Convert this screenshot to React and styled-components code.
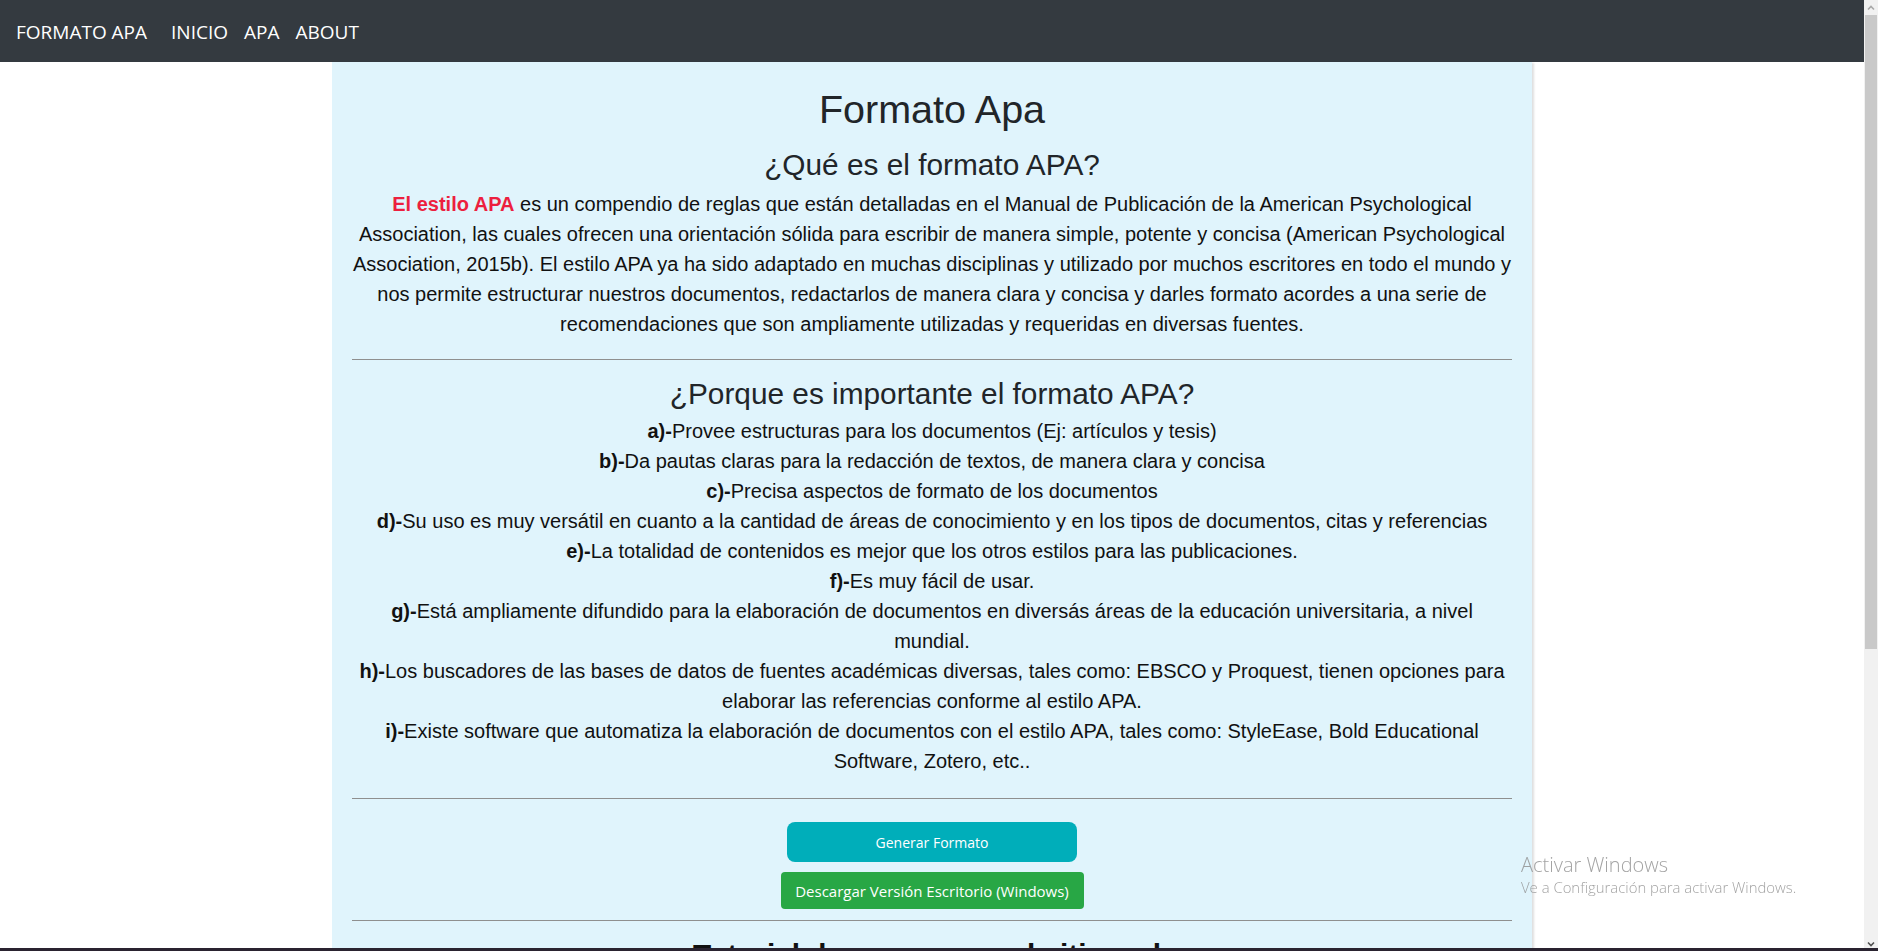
import React from "react";
import styled, { createGlobalStyle } from "styled-components";

const GlobalStyle = createGlobalStyle`
  html, body {
    margin: 0;
    padding: 0;
    background: #fff;
  }
  body {
    padding-right: 14px;
    font-family: "Liberation Sans", Arial, sans-serif;
  }
`;

const NavBar = styled.nav`
  display: flex;
  align-items: center;
  height: 62px;
  padding: 2px 16px 0;
  box-sizing: border-box;
  background-color: #343a40;
  font-family: "Open Sans", "Noto Sans", sans-serif;
  font-size: 19px;
  color: #fff;
`;

const Brand = styled.span`
  margin-right: 16px;
`;

const NavLink = styled.a`
  padding: 0 8px;
  color: #fff;
  text-decoration: none;
`;

const Panel = styled.main`
  width: 1200px;
  margin: 0 auto;
  padding: 23px 20px 35px;
  box-sizing: border-box;
  background-color: #e0f4fc;
  box-shadow: 3px 0 2px -1px rgba(0, 0, 0, 0.13);
  text-align: center;
`;

const Title = styled.h1`
  margin: 0;
  font-size: 39.5px;
  font-weight: 400;
  line-height: 48px;
  color: #212529;
`;

const Heading = styled.h2`
  margin: ${(p) => p.$top || 0}px 0 0;
  font-size: 29.8px;
  font-weight: ${(p) => (p.$bold ? 700 : 400)};
  line-height: 36px;
  color: ${(p) => (p.$bold ? "#111" : "#212529")};
`;

const Text = styled.p`
  margin: ${(p) => p.$top || 0}px 0 0;
  font-size: 20px;
  line-height: 30px;
  color: #111;
`;

const Highlight = styled.strong`
  color: #ec1f3f;
`;

const Divider = styled.hr`
  margin: ${(p) => p.$top}px 0 0;
  border: 0;
  border-top: 1px solid #8f8f8f;
`;

const ItemList = styled.div`
  margin-top: 4px;
`;

const Item = styled.p`
  margin: 0;
  font-size: 20px;
  line-height: 30px;
  color: #111;
`;

const ButtonStack = styled.div`
  display: flex;
  flex-direction: column;
  align-items: center;
  gap: 10px;
  margin-top: 23px;
`;

const Button = styled.button`
  width: ${(p) => p.$width}px;
  height: ${(p) => p.$height}px;
  padding: 0;
  border: 0;
  border-radius: ${(p) => p.$radius}px;
  background-color: ${(p) => p.$bg};
  color: #fff;
  font-family: "Open Sans", "Noto Sans", sans-serif;
  font-size: ${(p) => p.$size}px;
  cursor: pointer;
`;

const VideoFrame = styled.div`
  width: 640px;
  height: 360px;
  margin: 16px auto 0;
  background-color: #1c1c1c;
`;

/* browser scrollbar and OS overlays drawn over the page */
const ScrollBar = styled.div`
  position: fixed;
  top: 0;
  right: 0;
  bottom: 0;
  width: 14px;
  display: flex;
  flex-direction: column;
  background-color: #f1f1f1;
`;

const ScrollArrow = styled.div`
  display: flex;
  align-items: center;
  justify-content: center;
  height: 15px;
  flex: none;
`;

const ScrollThumb = styled.div`
  height: 634px;
  margin: 0 1px;
  background-color: #c9c9c9;
`;

const ScrollTrack = styled.div`
  flex: 1;
`;

const Watermark = styled.div`
  position: fixed;
  left: 1521px;
  top: 851px;
  font-family: "Open Sans", "Noto Sans", sans-serif;
  font-weight: 300;
  color: rgba(140, 140, 140, 0.8);
  pointer-events: none;
`;

const WatermarkTitle = styled.div`
  font-size: 20px;
  line-height: 27px;
`;

const WatermarkText = styled.div`
  font-size: 14.9px;
  line-height: 19px;
`;

const TaskbarEdge = styled.div`
  position: fixed;
  left: 0;
  right: 0;
  bottom: 0;
  height: 3px;
  background-color: #2a2330;
`;

const items = [
  ["a)-", "Provee estructuras para los documentos (Ej: artículos y tesis)"],
  ["b)-", "Da pautas claras para la redacción de textos, de manera clara y concisa"],
  ["c)-", "Precisa aspectos de formato de los documentos"],
  ["d)-", "Su uso es muy versátil en cuanto a la cantidad de áreas de conocimiento y en los tipos de documentos, citas y referencias"],
  ["e)-", "La totalidad de contenidos es mejor que los otros estilos para las publicaciones."],
  ["f)-", "Es muy fácil de usar."],
  ["g)-", "Está ampliamente difundido para la elaboración de documentos en diversás áreas de la educación universitaria, a nivel mundial."],
  ["h)-", "Los buscadores de las bases de datos de fuentes académicas diversas, tales como: EBSCO y Proquest, tienen opciones para elaborar las referencias conforme al estilo APA."],
  ["i)-", "Existe software que automatiza la elaboración de documentos con el estilo APA, tales como: StyleEase, Bold Educational Software, Zotero, etc.."],
];

function Chevron({ up, color }) {
  return (
    <svg width="10" height="8" viewBox="0 0 10 8">
      <path d={up ? "M2 5.5 5 2.5 8 5.5" : "M2 2.5 5 5.5 8 2.5"} fill="none" stroke={color} strokeWidth="1.6" />
    </svg>
  );
}

export default function App() {
  return (
    <>
      <GlobalStyle />
      <NavBar>
        <Brand>FORMATO APA</Brand>
        <NavLink href="#">INICIO</NavLink>
        <NavLink href="#">APA</NavLink>
        <NavLink href="#">ABOUT</NavLink>
      </NavBar>
      <Panel>
        <Title>Formato Apa</Title>
        <Heading $top={14}>¿Qué es el formato APA?</Heading>
        <Text $top={6}>
          <Highlight>El estilo APA</Highlight> es un compendio de reglas que están detalladas en el Manual de
          Publicación de la American Psychological Association, las cuales ofrecen una orientación sólida para
          escribir de manera simple, potente y concisa (American Psychological Association, 2015b). El estilo APA
          ya ha sido adaptado en muchas disciplinas y utilizado por muchos escritores en todo el mundo y nos
          permite estructurar nuestros documentos, redactarlos de manera clara y concisa y darles formato acordes
          a una serie de recomendaciones que son ampliamente utilizadas y requeridas en diversas fuentes.
        </Text>
        <Divider $top={20} />
        <Heading $top={16}>¿Porque es importante el formato APA?</Heading>
        <ItemList>
          {items.map(([label, text]) => (
            <Item key={label}>
              <strong>{label}</strong>
              {text}
            </Item>
          ))}
        </ItemList>
        <Divider $top={22} />
        <ButtonStack>
          <Button $width={290} $height={40} $radius={8} $bg="#00aeba" $size={14}>
            Generar Formato
          </Button>
          <Button $width={303} $height={37} $radius={4} $bg="#28a745" $size={15}>
            Descargar Versión Escritorio (Windows)
          </Button>
        </ButtonStack>
        <Divider $top={11} />
        <Heading $top={16} $bold>
          Tutorial de como usar el sitio web
        </Heading>
        <VideoFrame />
      </Panel>
      <ScrollBar>
        <ScrollArrow>
          <Chevron up color="#a8a8a8" />
        </ScrollArrow>
        <ScrollThumb />
        <ScrollTrack />
        <ScrollArrow>
          <Chevron color="#505050" />
        </ScrollArrow>
      </ScrollBar>
      <Watermark>
        <WatermarkTitle>Activar Windows</WatermarkTitle>
        <WatermarkText>Ve a Configuración para activar Windows.</WatermarkText>
      </Watermark>
      <TaskbarEdge />
    </>
  );
}
